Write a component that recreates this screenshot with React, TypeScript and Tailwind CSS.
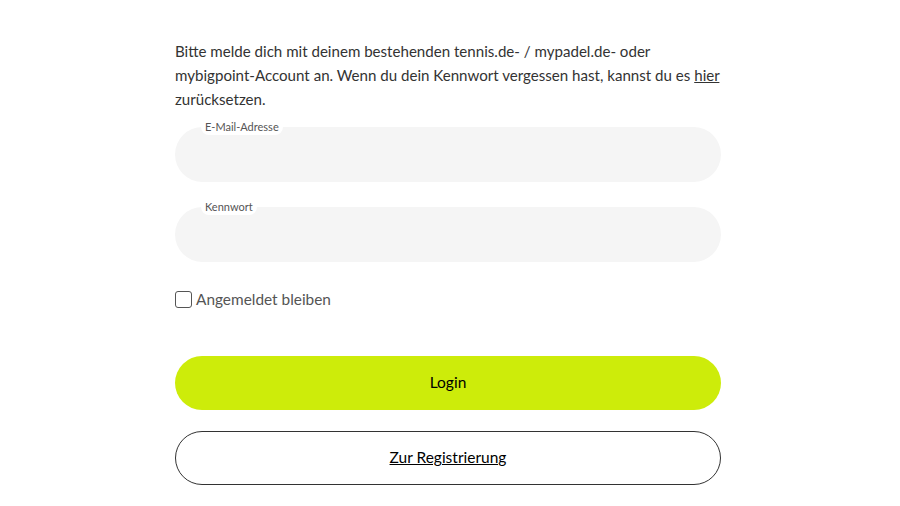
import React from "react";

const FloatingField = ({ label, type }: { label: string; type: string }) => {
  return (
    <div className="relative">
      <span className="absolute left-[26px] -top-[8px] rounded-full bg-white px-[4px] text-[11px] leading-[16px] text-[#555]">
        {label}
      </span>
      <input
        type={type}
        aria-label={label}
        className="block h-[55px] w-full rounded-full bg-[#f5f5f5] px-6 text-[16px] text-[#333] outline-none"
      />
    </div>
  );
};

export default function App() {
  return (
    <div className="min-h-[506px] w-full bg-white font-['Lato','Open_Sans',sans-serif]">
      <div className="ml-[175px] w-[546px] pt-[39px]">
        <p className="-mr-[4px] text-[15.1px] leading-[24px] text-[#333]">
          Bitte melde dich mit deinem bestehenden tennis.de- / mypadel.de- oder
          mybigpoint-Account an. Wenn du dein Kennwort vergessen hast, kannst du es{" "}
          <a href="#" className="underline">
            hier
          </a>{" "}
          zurücksetzen.
        </p>

        <div className="mt-[16px] flex flex-col gap-[25px]">
          <FloatingField label="E-Mail-Adresse" type="email" />
          <FloatingField label="Kennwort" type="password" />
        </div>

        <label className="mt-[26px] flex items-center gap-[4px] text-[15.4px] text-[#555]">
          <span className="h-[17px] w-[17px] rounded-[3px] border border-[#555] bg-white"></span>
          Angemeldet bleiben
        </label>

        <div className="mt-[45px] flex flex-col gap-[21px]">
          <button className="flex h-[54px] w-full items-center justify-center rounded-full bg-[#cdec0a] text-[15.5px] text-black">
            Login
          </button>
          <button className="flex h-[54px] w-full items-center justify-center rounded-full border border-[#333] bg-white text-[15.5px] text-black underline">
            Zur Registrierung
          </button>
        </div>
      </div>
    </div>
  );
}
